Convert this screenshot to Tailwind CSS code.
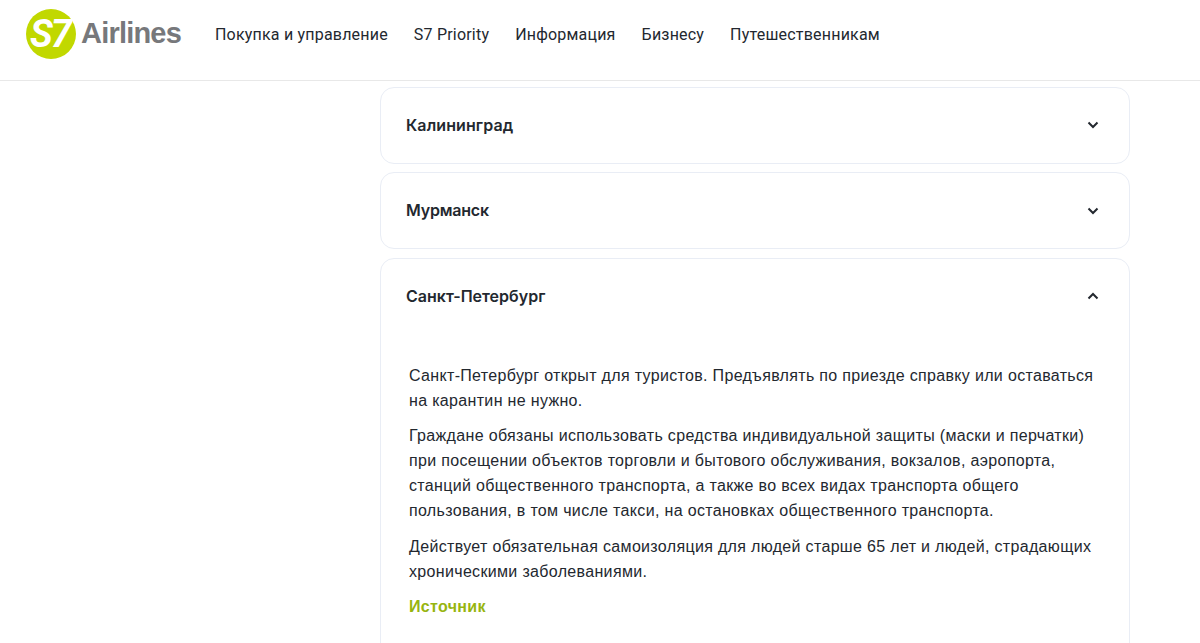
<!DOCTYPE html>
<html lang="ru">
<head>
  <meta charset="UTF-8" />
  <meta name="viewport" content="width=device-width, initial-scale=1.0"/>
  <title>S7 Airlines</title>
  <script src="https://cdn.jsdelivr.net/npm/@tailwindcss/browser@4"></script>
</head>
<body class="bg-white h-[643px] overflow-hidden font-['Liberation_Sans',sans-serif]">

  <header class="h-[81px] border-b border-[#e8e8e8] flex items-start pl-[26px] pt-[9px]">
    <a href="#" class="flex items-center h-[50px] w-[189px]">
      <span class="w-[50px] h-[50px] rounded-full bg-[#c1d800] flex items-center justify-center text-white font-['Roboto',sans-serif] font-bold italic text-[38px] tracking-[-2px] pr-[2px]">S7</span>
      <span class="ml-[5px] text-[#77787b] font-bold text-[29px] tracking-[-0.8px]">Airlines</span>
    </a>
    <nav class="flex gap-[26px] pt-[15px] font-['Roboto',sans-serif] text-[16px] tracking-[0.2px] leading-[22px] text-[#23282f]">
      <a href="#">Покупка и управление</a>
      <a href="#">S7 Priority</a>
      <a href="#">Информация</a>
      <a href="#">Бизнесу</a>
      <a href="#">Путешественникам</a>
    </nav>
  </header>

  <main class="ml-[380px] w-[750px] pt-[6px]">
    <div class="h-[77px] mb-[8px] border border-[#e9edf5] rounded-[14px] flex items-center justify-between pl-[25px] pr-[29px] pb-[2px]">
      <h3 class="font-['Inter',sans-serif] font-semibold text-[16px] tracking-[0.1px] text-[#23282f]">Калининград</h3>
      <svg class="w-[14px] h-[14px] text-[#23282f]" viewBox="0 0 14 14" fill="none" stroke="currentColor" stroke-width="2"><path d="M2.5 4.5 7 9l4.5-4.5"/></svg>
    </div>
    <div class="h-[77px] mb-[9px] border border-[#e9edf5] rounded-[14px] flex items-center justify-between pl-[25px] pr-[29px] pb-[2px]">
      <h3 class="font-['Inter',sans-serif] font-semibold text-[16px] tracking-[-0.2px] text-[#23282f]">Мурманск</h3>
      <svg class="w-[14px] h-[14px] text-[#23282f] translate-y-px" viewBox="0 0 14 14" fill="none" stroke="currentColor" stroke-width="2"><path d="M2.5 4.5 7 9l4.5-4.5"/></svg>
    </div>
    <div class="h-[400px] border border-[#e9edf5] rounded-[14px]">
      <div class="h-[73px] flex items-center justify-between pl-[25px] pr-[29px]">
        <h3 class="font-['Inter',sans-serif] font-semibold text-[16px] text-[#23282f]">Санкт-Петербург</h3>
        <svg class="w-[14px] h-[14px] text-[#23282f]" viewBox="0 0 14 14" fill="none" stroke="currentColor" stroke-width="2"><path d="M2.5 9.5 7 5l4.5 4.5"/></svg>
      </div>
      <div class="pl-[28px] pr-[30px] pt-[31px] text-[16px] tracking-[0.33px] leading-[25px] text-[#23282f]">
        <p class="mb-[10px]">Санкт-Петербург открыт для туристов. Предъявлять по приезде справку или оставаться на карантин не нужно.</p>
        <p class="mb-[11px]">Граждане обязаны использовать средства индивидуальной защиты (маски и перчатки) при посещении объектов торговли и бытового обслуживания, вокзалов, аэропорта, станций общественного транспорта, а также во всех видах транспорта общего пользования, в том числе такси, на остановках общественного транспорта.</p>
        <p class="mb-[10px]">Действует обязательная самоизоляция для людей старше 65 лет и людей, страдающих хроническими заболеваниями.</p>
        <a href="#" class="font-bold text-[#97b50f]">Источник</a>
      </div>
    </div>
  </main>

</body>
</html>
